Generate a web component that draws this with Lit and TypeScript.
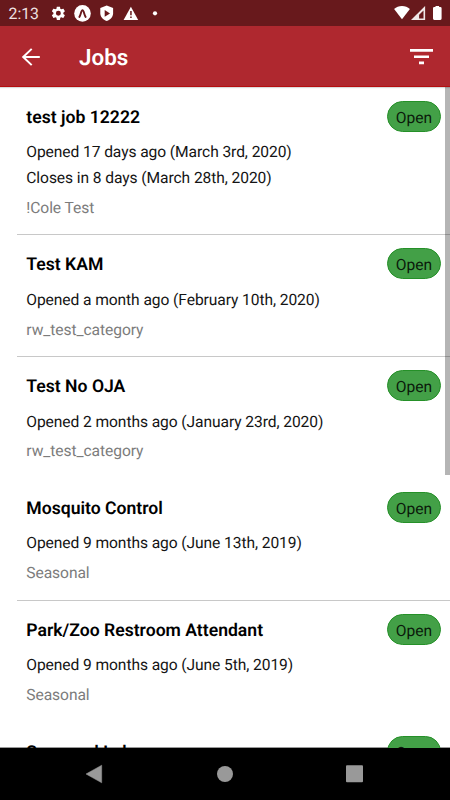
import { LitElement, html, css, svg } from "lit";
import { customElement, property } from "lit/decorators.js";

interface Job {
  title: string;
  dates: string[];
  category: string;
  divider: boolean;
}

const JOBS: Job[] = [
  { title: "test job 12222", dates: ["Opened 17 days ago (March 3rd, 2020)", "Closes in 8 days (March 28th, 2020)"], category: "!Cole Test", divider: true },
  { title: "Test KAM", dates: ["Opened a month ago (February 10th, 2020)"], category: "rw_test_category", divider: true },
  { title: "Test No OJA", dates: ["Opened 2 months ago (January 23rd, 2020)"], category: "rw_test_category", divider: false },
  { title: "Mosquito Control", dates: ["Opened 9 months ago (June 13th, 2019)"], category: "Seasonal", divider: true },
  { title: "Park/Zoo Restroom Attendant", dates: ["Opened 9 months ago (June 5th, 2019)"], category: "Seasonal", divider: false },
  { title: "Seasonal Labor", dates: [], category: "", divider: false },
];

@customElement("status-bar")
class StatusBar extends LitElement {
  static styles = css`
    :host { display: block; height: 26px; background: #68191c; color: #fff; flex: none; }
    .bar { display: flex; height: 26px; align-items: center; }
    .time { font-size: 15.8px; line-height: 26px; padding: 2px 0 0 8.5px; width: 37.5px; color: #efe2e2; }
    svg { display: block; flex: none; }
  `;
  render() {
    return html`<div class="bar">
      <span class="time">2:13</span>
      <svg width="404" height="26" viewBox="46 0 404 26" fill="#fff">
        <g transform="translate(50.1 5) scale(.69)">
          <path d="M19.14 12.94c.04-.3.06-.61.06-.94s-.02-.64-.07-.94l2.03-1.58c.18-.14.23-.41.12-.61l-1.92-3.32c-.12-.22-.37-.29-.59-.22l-2.39.96c-.5-.38-1.03-.7-1.62-.94L14.4 2.81c-.04-.24-.24-.41-.48-.41h-3.84c-.24 0-.43.17-.47.41l-.36 2.54c-.59.24-1.13.57-1.62.94l-2.39-.96c-.22-.08-.47 0-.59.22L2.74 8.87c-.12.21-.08.47.12.61l2.03 1.58c-.05.3-.09.63-.09.94s.02.64.07.94l-2.03 1.58c-.18.14-.23.41-.12.61l1.92 3.32c.12.22.37.29.59.22l2.39-.96c.5.38 1.03.7 1.62.94l.36 2.54c.05.24.24.41.48.41h3.84c.24 0 .44-.17.47-.41l.36-2.54c.59-.24 1.13-.56 1.62-.94l2.39.96c.22.08.47 0 .59-.22l1.92-3.32c.12-.22.07-.47-.12-.61l-2.01-1.58zM12 15.6a3.6 3.6 0 1 1 0-7.2 3.6 3.6 0 0 1 0 7.2z"/>
        </g>
        <circle cx="82.5" cy="13.4" r="8.3"/>
        <path d="M79.4 16.9c1.5-2 1.7-6.7 3.1-6.7s1.6 4.7 3.1 6.7" fill="none" stroke="#68191c" stroke-width="1.9" stroke-linecap="round"/>
        <path d="M106.7 5.6l6.4 2.3v5.4c0 3.6-2.7 6.6-6.4 7.8-3.7-1.2-6.4-4.2-6.4-7.8V7.9z"/>
        <path d="M104.7 10v6.8l5.3-3.4z" fill="#68191c"/>
        <path d="M130.9 6.7l7.3 13.3h-14.6z"/>
        <path d="M130.2 11h1.5v4.3h-1.5zM130.2 16.4h1.5v1.6h-1.5z" fill="#68191c"/>
        <circle cx="155" cy="13.3" r="2.1"/>
        <path d="M402 19.3L394.1 9c2.2-1.9 4.8-3 7.9-3s5.7 1.1 7.9 3z"/>
        <path d="M425.1 6v13.9H411z" opacity=".9"/>
        <path d="M423.5 10.5v7.9h-4.4v-3.6z" fill="#68191c"/>
        <path d="M434.3 7h1.2V5.9h3.6V7h1.2q1.3 0 1.3 1.3v10.3q0 1.3-1.3 1.3h-6q-1.3 0-1.3-1.3V8.3q0-1.3 1.3-1.3z"/>
      </svg>
    </div>`;
  }
}

@customElement("app-header")
class AppHeader extends LitElement {
  static styles = css`
    :host { display: block; flex: none; position: relative; z-index: 1; }
    .header { box-sizing: border-box; height: 61px; background: #af282f; border-bottom: 1px solid #b40f10; box-shadow: 0 1px 1px rgba(0, 0, 0, 0.14); display: flex; align-items: center; padding: 0 16px 0 21px; color: #fff; }
    .title { font-size: 22.4px; font-weight: 600; margin: 4px auto 0 38px; line-height: 26px; }
    svg { display: block; margin-top: 1px; }
  `;
  render() {
    return html`<div class="header">
      <svg width="20" height="20" viewBox="0 0 20 20" fill="none" stroke="#fff" stroke-width="2"><path d="M18.8 10H2.2M10.7 1.9L2.2 10l8.5 8.1"/></svg>
      <span class="title">Jobs</span>
      <svg width="24" height="18" viewBox="0 0 24 18" fill="#fff"><path d="M0 1h23v2.8H0zM4 7.5h15v2.4H4zM9 13.5h5v2.7H9z"/></svg>
    </div>`;
  }
}

@customElement("job-row")
class JobRow extends LitElement {
  @property({ attribute: false }) job!: Job;
  static styles = css`
    :host { display: block; flex: none; }
    .row { box-sizing: border-box; margin-left: 17px; padding: 13px 9px 13.5px 9.3px; display: flex; justify-content: space-between; align-items: flex-start; border-bottom: 1px solid transparent; }
    .divided { border-color: #c8c8c8; }
    .title { font-size: 17.6px; font-weight: 600; line-height: 35.6px; height: 39.4px; color: #000; white-space: nowrap; }
    .date { font-size: 15.6px; line-height: 25.6px; height: 25.6px; letter-spacing: -0.085px; color: #141414; white-space: nowrap; }
    .category { font-size: 15.6px; line-height: 26px; height: 26px; letter-spacing: -0.07px; margin-top: 3.3px; color: #7c7c7c; }
    .pill { box-sizing: border-box; width: 54px; height: 31px; border-radius: 15.5px; background: #43a047; border: 1px solid #259028; font-size: 15.6px; line-height: 32px; text-align: center; color: #0b1a0b; flex: none; }
  `;
  render() {
    const j = this.job;
    return html`<div class="row ${j.divider ? "divided" : ""}">
      <div>
        <div class="title">${j.title}</div>
        ${j.dates.map((d) => html`<div class="date">${d}</div>`)}
        ${j.category ? html`<div class="category">${j.category}</div>` : ""}
      </div>
      <div class="pill">Open</div>
    </div>`;
  }
}

@customElement("app-root")
class AppRoot extends LitElement {
  static styles = css`
    :host { display: flex; flex-direction: column; width: 450px; height: 800px; overflow: hidden; background: #fff; font-family: Roboto, sans-serif; text-rendering: geometricPrecision; }
    .list { flex: 1; min-height: 0; box-sizing: border-box; padding-top: 1px; overflow: hidden; position: relative; display: flex; flex-direction: column; background: linear-gradient(#999, #999) bottom / 100% 1px no-repeat; }
    .thumb { position: absolute; right: 0; top: 0; width: 4.6px; height: 388px; background: rgba(0, 0, 0, 0.29); }
    .nav { flex: none; height: 52px; background: #000; }
    svg { display: block; }
  `;
  render() {
    return html`
      <status-bar></status-bar>
      <app-header></app-header>
      <div class="list">
        ${JOBS.map((j) => html`<job-row .job=${j}></job-row>`)}
        <div class="thumb"></div>
      </div>
      <div class="nav">
        ${svg`<svg width="450" height="52" viewBox="0 0 450 52" fill="#999"><path d="M101.7 17.2v17.6L86 26z" stroke="#999" stroke-width=".5" stroke-linejoin="round"/><circle cx="225" cy="26" r="8"/><rect x="346" y="17.2" width="17" height="17" rx="1"/></svg>`}
      </div>`;
  }
}
